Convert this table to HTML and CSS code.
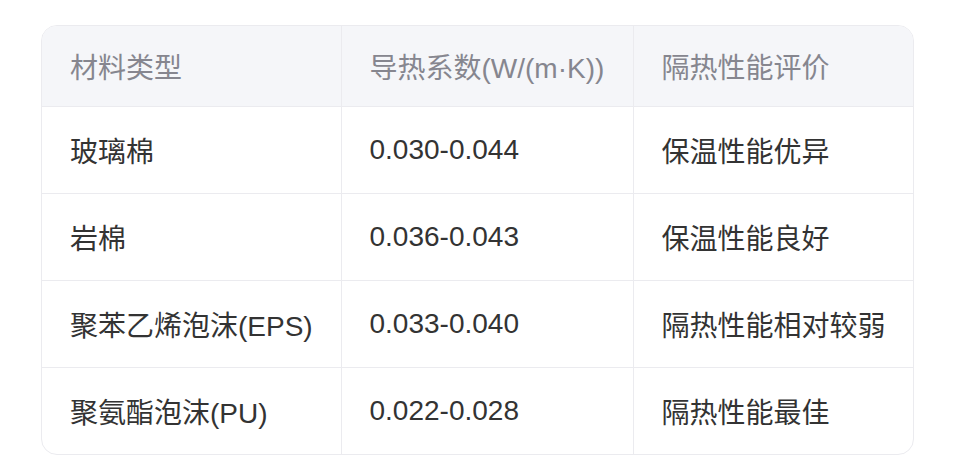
FILE: index.html
```html
<!DOCTYPE html>
<html lang="zh">
<head>
<meta charset="utf-8">
<link rel="stylesheet" href="styles.css">
</head>
<body>
<div class="wrap">
  <div class="card">
    <table class="tbl">
      <colgroup>
        <col class="c1"><col class="c2"><col class="c3">
      </colgroup>
      <thead>
        <tr><th>材料类型</th><th>导热系数(W/(m·K))</th><th>隔热性能评价</th></tr>
      </thead>
      <tbody>
        <tr><td>玻璃棉</td><td>0.030-0.044</td><td>保温性能优异</td></tr>
        <tr><td>岩棉</td><td>0.036-0.043</td><td>保温性能良好</td></tr>
        <tr><td>聚苯乙烯泡沫(EPS)</td><td>0.033-0.040</td><td>隔热性能相对较弱</td></tr>
        <tr><td>聚氨酯泡沫(PU)</td><td>0.022-0.028</td><td>隔热性能最佳</td></tr>
      </tbody>
    </table>
  </div>
</div>
</body>
</html>
```

FILE: styles.css
```css
html, body {
  margin: 0;
  padding: 0;
  background: #ffffff;
}
.wrap {
  padding: 25px 0 0 41px;
}
.card {
  width: 873px;
  border: 1px solid #ebebef;
  border-radius: 16px;
  overflow: hidden;
  box-sizing: border-box;
}
.tbl {
  width: 100%;
  border-collapse: collapse;
  table-layout: fixed;
  font-family: "Liberation Sans", "Noto Sans CJK SC", sans-serif;
  font-size: 28px;
}
.c1 { width: 299px; }
.c2 { width: 292px; }
.c3 { width: auto; }
.tbl th, .tbl td {
  text-align: left;
  padding: 0 28px;
  border-left: 1px solid #ebebef;
  white-space: nowrap;
}
.tbl th:first-child, .tbl td:first-child {
  border-left: none;
}
.tbl th {
  height: 80px;
  background: #f5f6f9;
  color: #86868f;
  font-weight: normal;
}
.tbl td {
  height: 86px;
  color: #333333;
  border-top: 1px solid #ebebef;
}
```
